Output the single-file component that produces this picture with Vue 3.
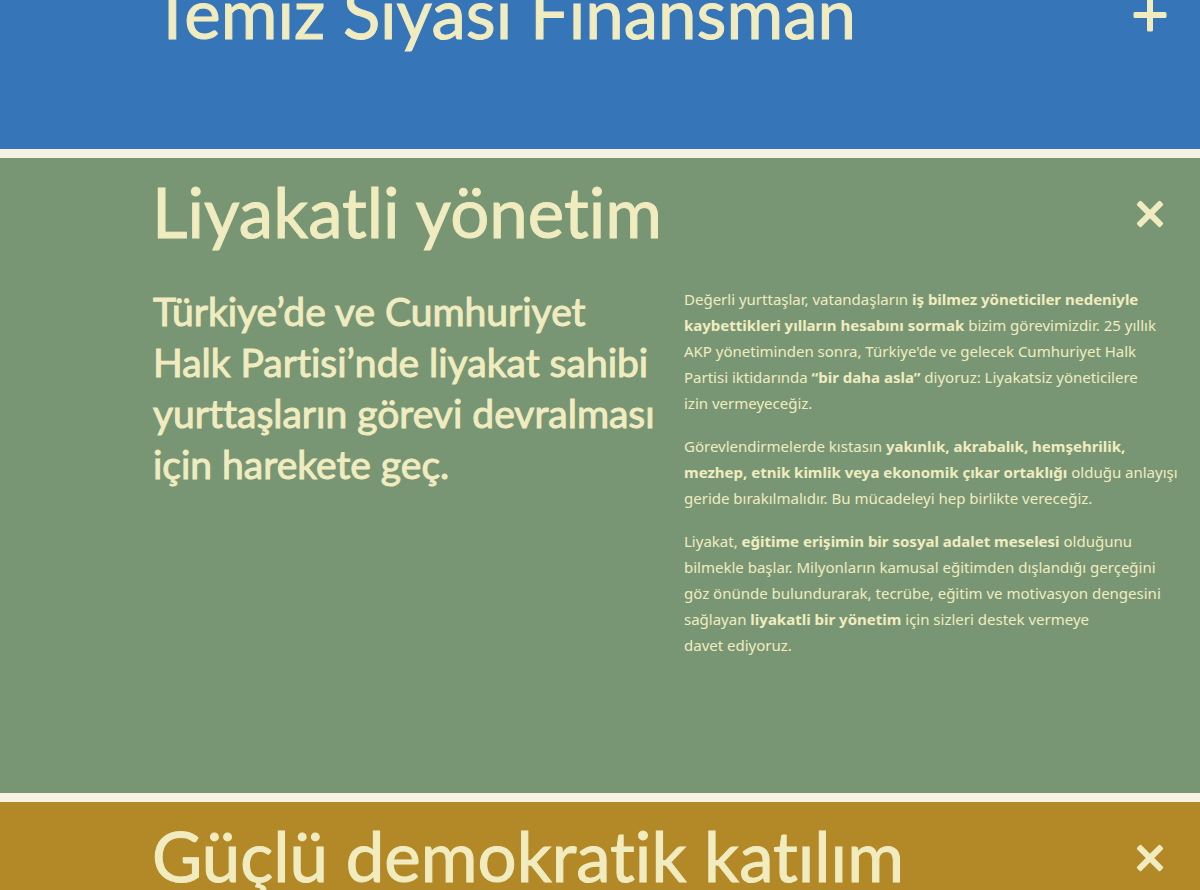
<script setup>
import { reactive } from 'vue'

const panels = reactive([
  { id: 'finansman', title: 'Temiz Siyasi Finansman', tone: 'blue', expanded: false },
  { id: 'liyakat', title: 'Liyakatli yönetim', tone: 'green', expanded: true },
  { id: 'katilim', title: 'Güçlü demokratik katılım', tone: 'gold', expanded: true }
])
</script>

<template>
  <main class="page">
    <section v-for="panel in panels" :key="panel.id" class="panel" :class="panel.tone">
      <h2 class="title">
        <button
          type="button"
          class="toggle"
          :aria-expanded="panel.expanded"
          @click="panel.expanded = !panel.expanded"
        >
          <span>{{ panel.title }}</span>
          <svg class="icon" :class="{ open: panel.expanded }" viewBox="0 0 34 34" aria-hidden="true">
            <rect x="14" y="0.5" width="6" height="33" rx="1.5" />
            <rect x="0.5" y="14" width="33" height="6" rx="1.5" />
          </svg>
        </button>
      </h2>
      <div v-if="panel.id === 'liyakat' && panel.expanded" class="content">
        <p class="lead">
          Türkiye’de ve Cumhuriyet<br />Halk Partisi’nde liyakat sahibi<br />yurttaşların görevi devralması<br />için harekete geç.
        </p>
        <div class="body">
          <p>
            Değerli yurttaşlar, vatandaşların <strong>iş bilmez yöneticiler nedeniyle<br />kaybettikleri yılların hesabını sormak</strong> bizim görevimizdir. 25 yıllık<br />AKP yönetiminden sonra, Türkiye'de ve gelecek Cumhuriyet Halk<br />Partisi iktidarında <strong>“bir daha asla”</strong> diyoruz: Liyakatsiz yöneticilere<br />izin vermeyeceğiz.
          </p>
          <p>
            Görevlendirmelerde kıstasın <strong>yakınlık, akrabalık, hemşehrilik,<br />mezhep, etnik kimlik veya ekonomik çıkar ortaklığı</strong> olduğu anlayışı<br />geride bırakılmalıdır. Bu mücadeleyi hep birlikte vereceğiz.
          </p>
          <p>
            Liyakat, <strong>eğitime erişimin bir sosyal adalet meselesi</strong> olduğunu<br />bilmekle başlar. Milyonların kamusal eğitimden dışlandığı gerçeğini<br />göz önünde bulundurarak, tecrübe, eğitim ve motivasyon dengesini<br />sağlayan <strong>liyakatli bir yönetim</strong> için sizleri destek vermeye<br />davet ediyoruz.
          </p>
        </div>
      </div>
    </section>
  </main>
</template>

<style>
body {
  margin: 0;
}
</style>

<style scoped>
.page {
  height: 100vh;
  overflow: hidden;
  background: #f7f3e4;
  color: #f0ecc0;
}
.panel {
  display: flow-root;
  margin-bottom: 9px;
}
.blue {
  margin-top: -41px;
  padding-bottom: 78px;
  background: #3575b8;
}
.green {
  padding-bottom: 135px;
  background: #789674;
}
.gold {
  padding-bottom: 135px;
  background: #b38928;
}
.title {
  margin: 0;
}
.toggle {
  display: flex;
  align-items: center;
  justify-content: space-between;
  box-sizing: border-box;
  width: 100%;
  height: 112px;
  padding: 0 33px 0 152px;
  border: 0;
  background: none;
  color: inherit;
  font: 400 69px/80px Lato, sans-serif;
  font-variant-ligatures: none;
  -webkit-text-stroke: 1px currentColor;
  text-align: left;
  white-space: nowrap;
  cursor: pointer;
}
.toggle span {
  padding-bottom: 4px;
}
.icon {
  flex: none;
  width: 34px;
  height: 34px;
  fill: currentColor;
  stroke: none;
}
.icon.open {
  transform: rotate(45deg);
}
.content {
  display: grid;
  grid-template-columns: minmax(0, 1fr) minmax(0, 1fr);
  gap: 31px;
  padding: 16px 16px 0 153px;
}
.lead {
  margin: 0;
  font: 400 39px/51px Lato, sans-serif;
  font-variant-ligatures: none;
  -webkit-text-stroke: 1px currentColor;
  white-space: nowrap;
}
.body {
  font: 400 15px/26px "Noto Sans", sans-serif;
  white-space: nowrap;
}
.body p {
  margin: 0 0 17px;
}
.body p:last-child {
  margin-bottom: 0;
}
.body strong {
  font-weight: 700;
}
</style>
